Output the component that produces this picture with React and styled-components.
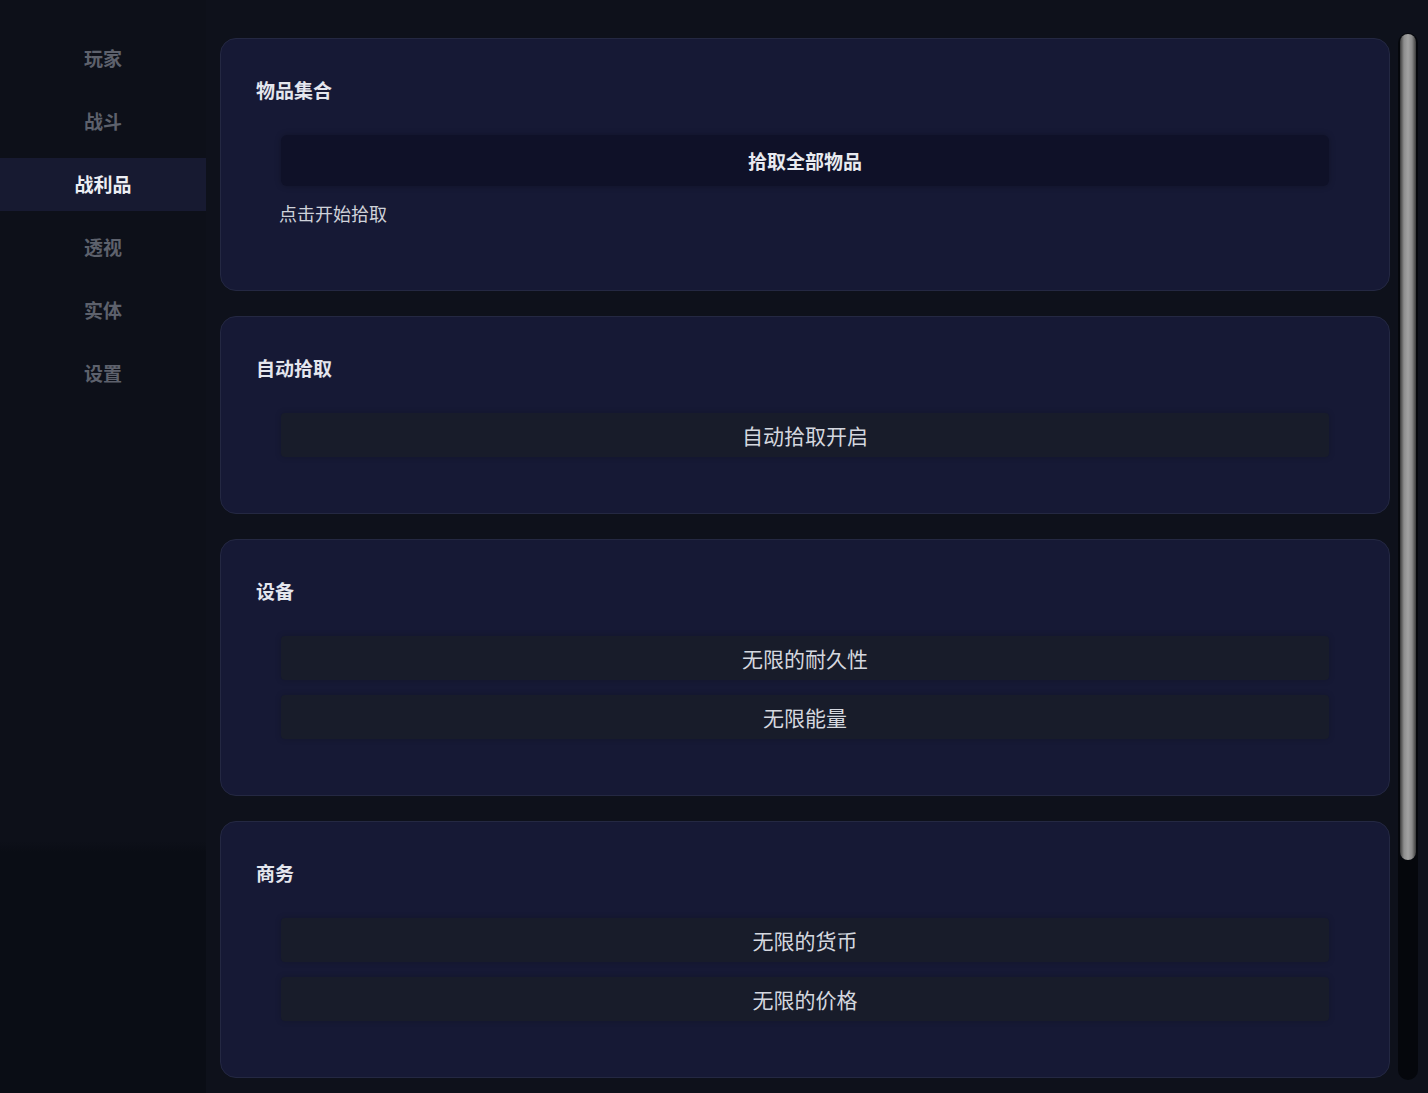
import React from 'react';
import styled, { createGlobalStyle } from 'styled-components';

const GlobalStyle = createGlobalStyle`
  html, body {
    margin: 0;
    padding: 0;
    background: #0e111b;
    font-family: "Noto Sans CJK SC", "Noto Sans", sans-serif;
  }
  * {
    box-sizing: border-box;
  }
`;

const Page = styled.div`
  display: flex;
  height: 100vh;
  background: #0e111b;
  overflow: hidden;
`;

const Sidebar = styled.nav`
  width: 206px;
  flex-shrink: 0;
  padding-top: 32px;
  display: flex;
  flex-direction: column;
  gap: 10px;
  background: linear-gradient(180deg, #0d1019 0%, #0d1019 77%, #0a0d15 78%, #0a0d15 100%);
`;

const NavItem = styled.div`
  height: 53px;
  display: flex;
  align-items: center;
  justify-content: center;
  padding-bottom: 2px;
  font-size: 19px;
  font-weight: 700;
  color: ${(p) => (p.active ? '#eceef4' : '#5d616c')};
  background: ${(p) => (p.active ? '#171a31' : 'transparent')};
  cursor: pointer;
`;

const Main = styled.main`
  flex: 1;
  margin-left: 14px;
  margin-right: 10px;
  padding: 33px 0 13px;
  display: flex;
  gap: 8px;
`;

const Scroller = styled.div`
  flex: 1;
  overflow: hidden;
  padding-top: 5px;
  display: flex;
  flex-direction: column;
  gap: 25px;
`;

const ScrollTrack = styled.div`
  width: 20px;
  flex-shrink: 0;
  background: #05070c;
  border-radius: 10px;
  padding: 1px 2px;
`;

const ScrollThumb = styled.div`
  width: 100%;
  border-radius: 8px;
  background: linear-gradient(90deg, #3c3c3c 0%, #8e8e8e 25%, #a2a2a2 50%, #8a8a8a 75%, #3a3a3a 100%);
`;

const Card = styled.section`
  flex-shrink: 0;
  background: #161935;
  border: 1px solid #242842;
  border-radius: 16px;
  padding: 38px 35px 56px;
`;

const CardTitle = styled.h3`
  margin: 0 0 32px;
  font-size: 19px;
  line-height: 26px;
  font-weight: 700;
  color: #e4e6ee;
`;

const Rows = styled.div`
  display: flex;
  flex-direction: column;
  gap: 15px;
  margin: ${(p) => (p.first ? '3px' : '0')} 25px 0;
`;

const ActionButton = styled.button`
  height: 51px;
  width: 100%;
  border: none;
  border-radius: 6px;
  background: #0f1128;
  box-shadow: 0 0 6px rgba(0, 0, 0, 0.25);
  color: #e8eaf0;
  font-family: inherit;
  font-size: 19px;
  font-weight: 700;
  cursor: pointer;
`;

const ToggleRow = styled.button`
  height: 44px;
  width: 100%;
  border: none;
  border-radius: 4px;
  background: #181c2a;
  box-shadow: 0 0 6px rgba(0, 0, 0, 0.18);
  color: #d4d7df;
  font-family: inherit;
  font-size: 21px;
  font-weight: 400;
  cursor: pointer;
`;

const Status = styled.div`
  margin: 0 0 9px -2px;
  font-size: 18px;
  line-height: 24px;
  color: #cfd2da;
`;

const navItems = ['玩家', '战斗', '战利品', '透视', '实体', '设置'];

const sections = [
  { title: '自动拾取', rows: ['自动拾取开启'] },
  { title: '设备', rows: ['无限的耐久性', '无限能量'] },
  { title: '商务', rows: ['无限的货币', '无限的价格'] },
];

// visible part of the scroll area, taken from the reference layout
const thumbRatio = 0.79;

export default function App() {
  return (
    <Page>
      <GlobalStyle />
      <Sidebar>
        {navItems.map((item) => (
          <NavItem key={item} active={item === '战利品'}>
            {item}
          </NavItem>
        ))}
      </Sidebar>
      <Main>
        <Scroller>
          <Card>
            <CardTitle>物品集合</CardTitle>
            <Rows first>
              <ActionButton>拾取全部物品</ActionButton>
              <Status>点击开始拾取</Status>
            </Rows>
          </Card>
          {sections.map((s) => (
            <Card key={s.title}>
              <CardTitle>{s.title}</CardTitle>
              <Rows>
                {s.rows.map((r) => (
                  <ToggleRow key={r}>{r}</ToggleRow>
                ))}
              </Rows>
            </Card>
          ))}
        </Scroller>
        <ScrollTrack>
          <ScrollThumb style={{ height: `${thumbRatio * 100}%` }} />
        </ScrollTrack>
      </Main>
    </Page>
  );
}
